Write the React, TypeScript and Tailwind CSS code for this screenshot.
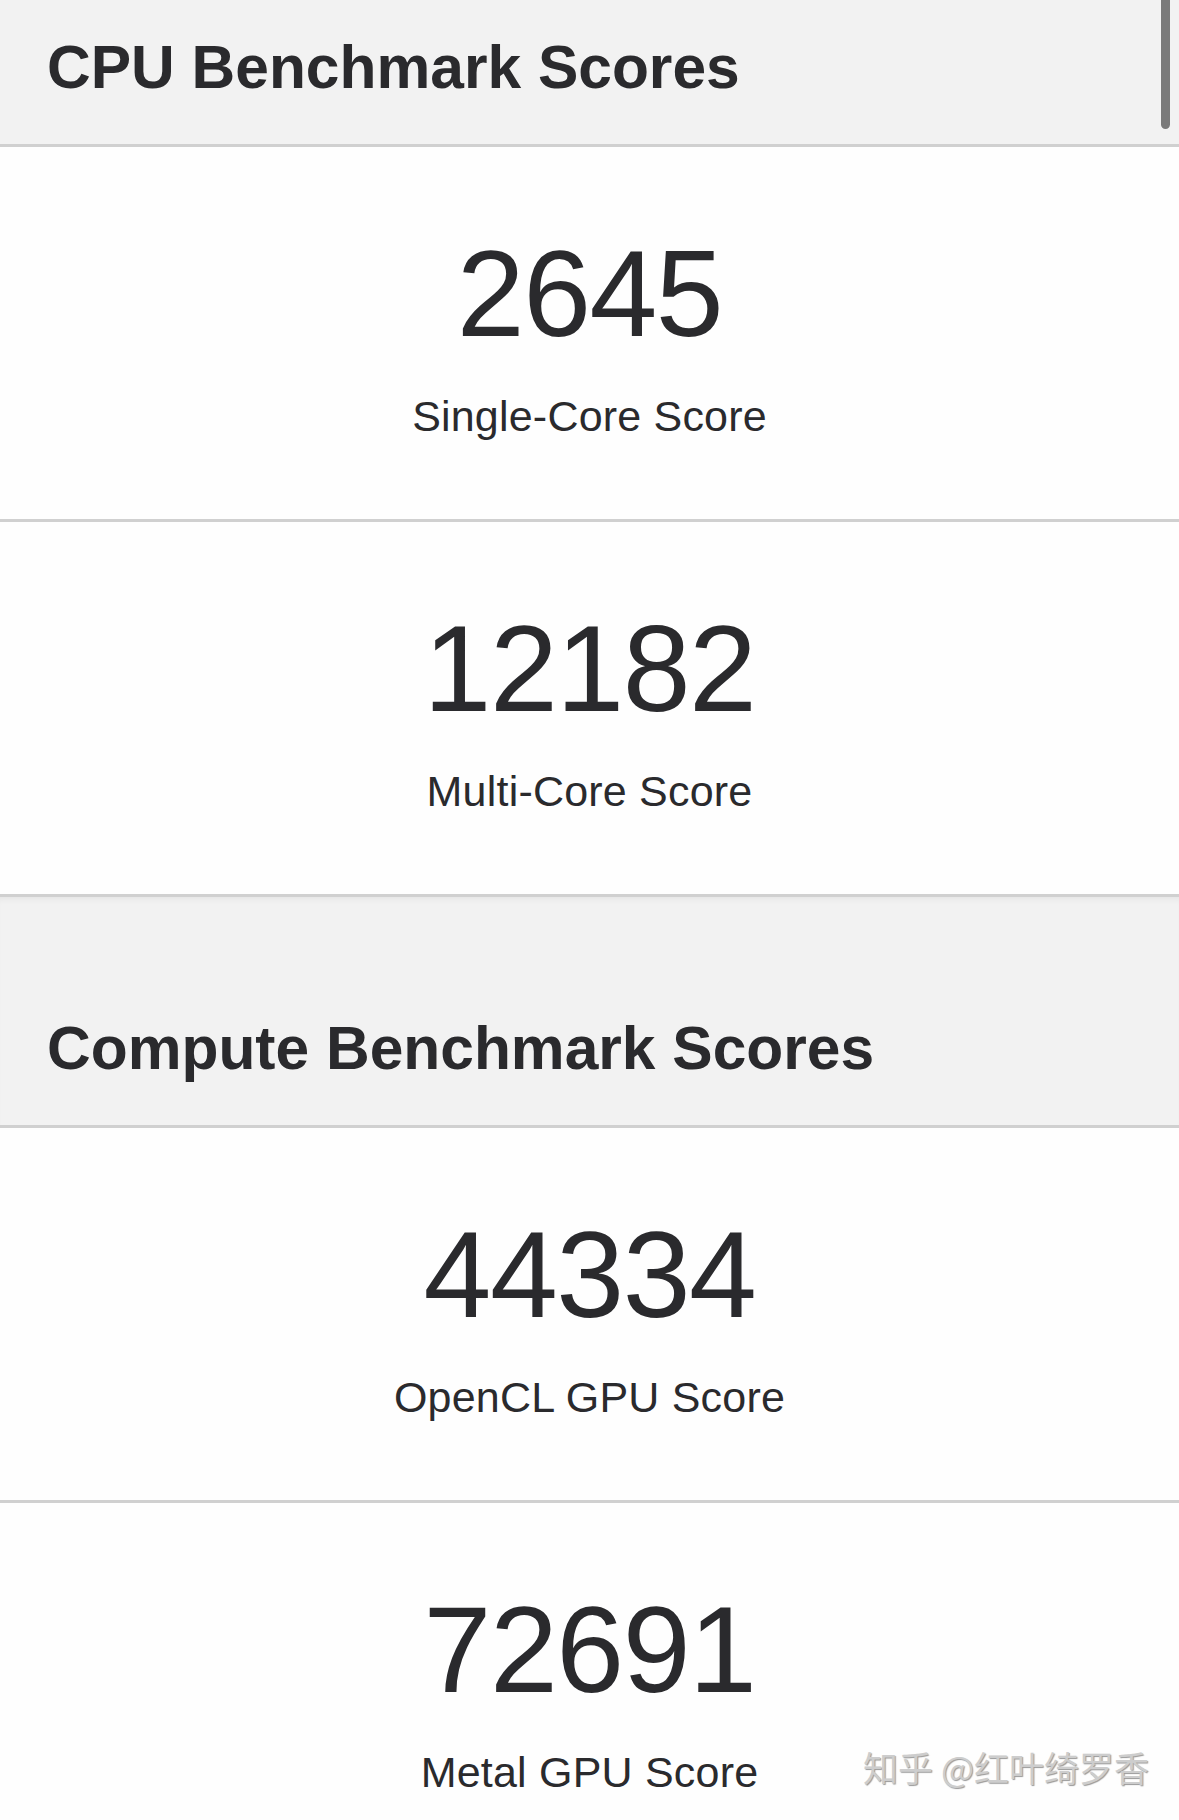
import React from "react";

function ScoreCard({ value, label }: { value: string; label: string }) {
  return (
    <div className="h-[375px] border-b-[3px] border-[#d0d0d0] bg-[#fefefe] flex flex-col items-center pt-[86px]">
      <div className="text-[122px] leading-[122px] tracking-[-1.5px] font-normal text-[#2a2a2d]">{value}</div>
      <div className="mt-[40px] text-[43px] leading-[43px] tracking-[0.2px] font-normal text-[#2a2a2d]">{label}</div>
    </div>
  );
}

export default function App() {
  return (
    <div className="relative w-full h-[1820px] overflow-hidden bg-[#fefefe] font-['Liberation_Sans',Arial,sans-serif]">
      <div className="h-[147px] border-b-[3px] border-[#d0d0d0] bg-[#f2f2f2] pl-[47px] pt-[37px]">
        <h1 className="text-[60.5px] leading-[60px] font-bold text-[#2a2a2d]">CPU Benchmark Scores</h1>
      </div>
      <ScoreCard value="2645" label="Single-Core Score" />
      <ScoreCard value="12182" label="Multi-Core Score" />
      <div className="h-[231px] border-b-[3px] border-[#d0d0d0] bg-[#f2f2f2] pl-[47px] pt-[121px] shadow-[inset_0_6px_6px_-4px_rgba(0,0,0,0.06)]">
        <h2 className="text-[60.5px] leading-[60px] font-bold text-[#2a2a2d]">Compute Benchmark Scores</h2>
      </div>
      <ScoreCard value="44334" label="OpenCL GPU Score" />
      <ScoreCard value="72691" label="Metal GPU Score" />

      <div className="absolute top-0 right-[9px] w-[9px] h-[129px] rounded-b-full bg-[#7a7a7a]" />

      <div className="absolute top-[1747px] right-[30px] text-[35px] leading-[40px] text-[#cdcdcd] font-['Noto_Sans_CJK_SC',sans-serif] [text-shadow:1px_1px_1px_rgba(0,0,0,0.4)] whitespace-nowrap">
        知乎 @红叶绮罗香
      </div>
    </div>
  );
}
